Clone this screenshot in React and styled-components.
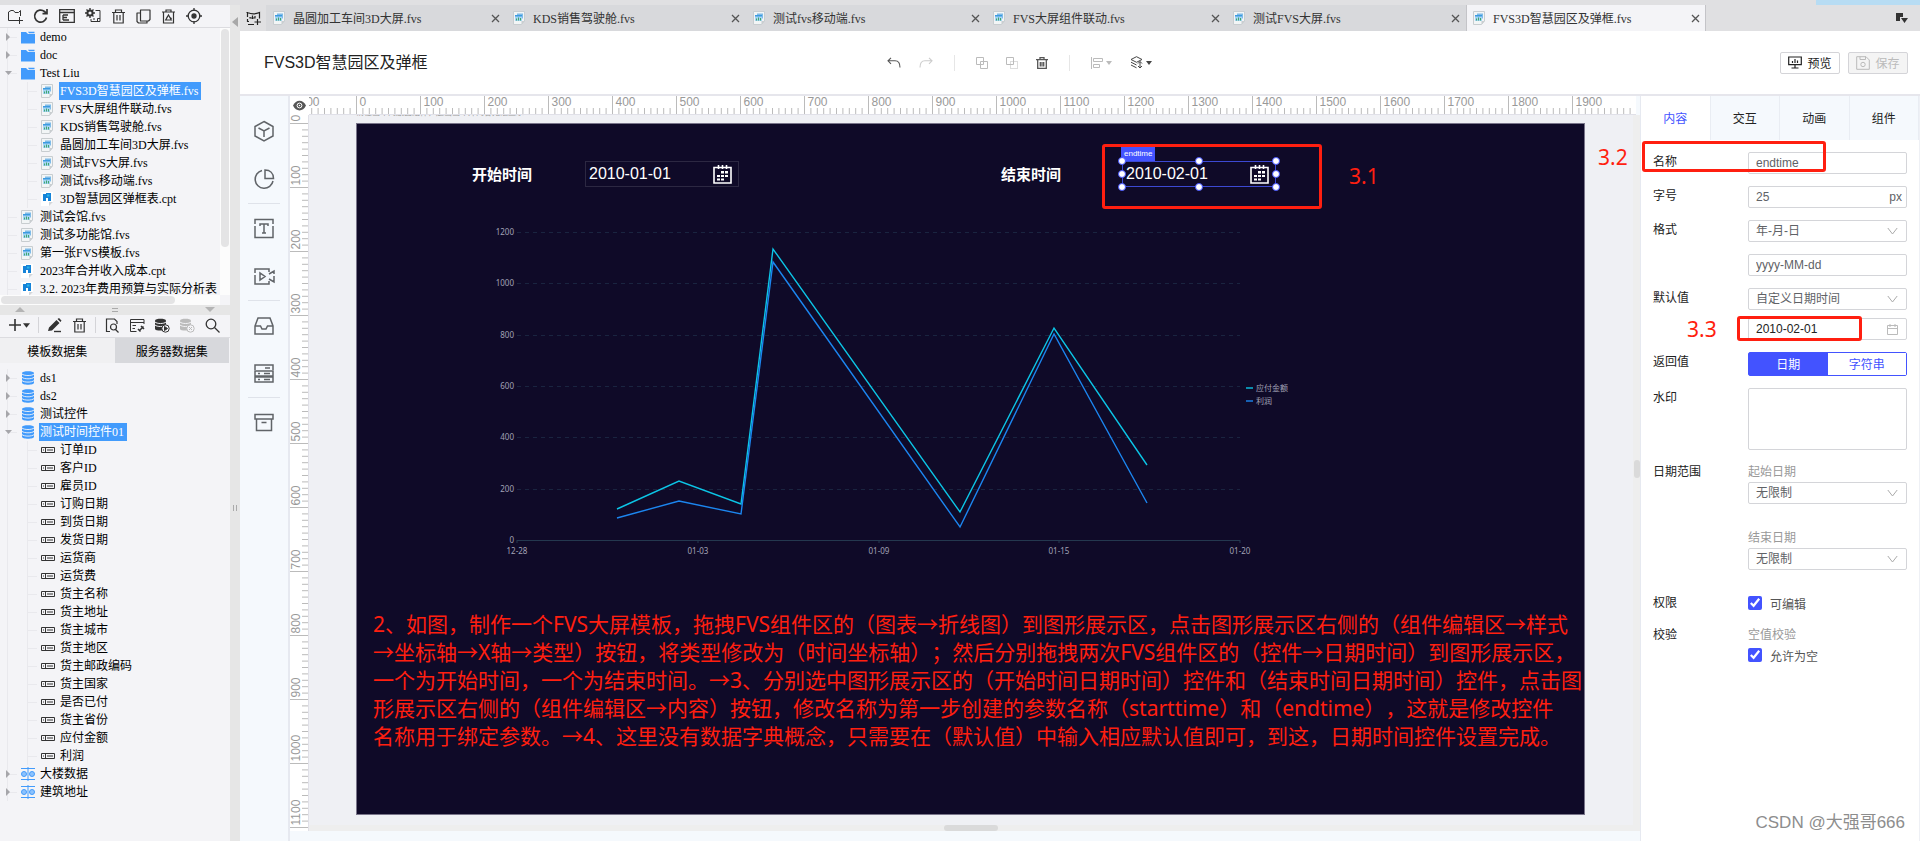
import React, { useState } from 'react';
import styled, { createGlobalStyle } from 'styled-components';

const UI_FONT = "'Liberation Sans', 'Noto Sans CJK SC', sans-serif";
const TREE_FONT = "'Liberation Serif', 'Noto Sans CJK SC', serif";
const NOTE_FONT = "'Noto Sans', 'Noto Sans CJK SC', sans-serif";

const GlobalStyle = createGlobalStyle`
  * {
    box-sizing: border-box;
  }

  body {
    margin: 0;
    overflow: hidden;
    font-family: ${UI_FONT};
    font-size: 12px;
    color: #222;
  }

  button, input, select, textarea {
    font-family: inherit;
    font-size: 12px;
    margin: 0;
  }

  ul {
    margin: 0;
    padding: 0;
    list-style: none;
  }
`;

/* ---------- shell ---------- */

const StyledApp = styled.div`
  display: flex;
  flex-direction: column;
  height: 100vh;
  background: #e0e0e2;
`;

const StyledTopStrip = styled.div`
  flex: none;
  display: flex;
  justify-content: flex-end;
  height: 5px;

  span {
    width: 104px;
    background: #b7dcf3;
  }
`;

const StyledBody = styled.div`
  flex: 1;
  display: flex;
  min-height: 0;
`;

const StyledSidebar = styled.aside`
  flex: none;
  display: flex;
  flex-direction: column;
  width: 230px;
  background: #f4f4f7;
  font-family: ${TREE_FONT};
  color: #000;
`;

const StyledSplitter = styled.div`
  flex: none;
  display: flex;
  flex-direction: column;
  align-items: center;
  justify-content: space-between;
  width: 10px;
  padding: 12px 0 330px;
  background: #e6e6e6;
`;

const StyledWorkspace = styled.main`
  flex: 1;
  display: flex;
  flex-direction: column;
  min-width: 0;
`;

/* ---------- sidebar ---------- */

const StyledIconBar = styled.div`
  flex: none;
  display: flex;
  align-items: center;
  justify-content: space-between;
  height: 23px;
  padding: ${({ $wide }) => ($wide ? '0 10px 2px 9px' : '0 28px 0 7px')};
  border-bottom: 1px solid #dcdce0;
`;

const StyledIconButton = styled.button`
  display: inline-flex;
  align-items: center;
  justify-content: center;
  gap: ${({ $gap }) => $gap || 0}px;
  padding: 0;
  border: 0;
  background: none;
  color: ${({ $color }) => $color || '#333'};
  cursor: pointer;
`;

const StyledBarSeparator = styled.span`
  width: 1px;
  height: 16px;
  margin: 0 -2px;
  background: #d4d4d8;
`;

const StyledFilePane = styled.div`
  flex: none;
  display: grid;
  grid-template-columns: 1fr 10px;
  grid-template-rows: 267px 10px;
`;

const StyledTreeScroll = styled.div`
  overflow: hidden;
`;

const StyledTrack = styled.div`
  padding: 1px;
  background: #fcfcfc;
`;

const StyledThumb = styled.div`
  width: ${({ $w }) => $w};
  height: ${({ $h }) => $h};
  border-radius: 4px;
  background: #e4e4e5;
`;

const StyledCollapser = styled.div`
  flex: none;
  display: flex;
  align-items: center;
  justify-content: space-between;
  height: 10px;
  padding: 0 15px;
  background: #e6e6e6;
`;

const StyledDataTabs = styled.div`
  flex: none;
  display: flex;
  height: 25px;
  margin-bottom: 6px;
  padding-right: 1px;
`;

const StyledDataTab = styled.button`
  flex: 1;
  padding: 0;
  border: 0;
  color: #000;
  background: ${({ $active }) => ($active ? '#f0f0f2' : '#d7d8dc')};
`;

const StyledTreeRow = styled.li`
  display: flex;
  align-items: center;
  height: 18px;
  line-height: 18px;
  white-space: nowrap;
`;

const StyledGuide = styled.span`
  flex: none;
  display: flex;
  align-items: center;
  width: 20px;
  height: 18px;
  padding-left: 5px;
  background:
    linear-gradient(#e9e9ed, #e9e9ed) 7px 0 / 1px 100% no-repeat,
    linear-gradient(#e9e9ed, #e9e9ed) 7px 9px /
      ${({ $stub }) => ($stub ? '10px' : '0')} 1px no-repeat;
`;

const StyledRowIcon = styled.span`
  flex: none;
  display: flex;
  align-items: center;
  width: 19px;
  padding-left: 1px;
`;

const StyledRowLabel = styled.span`
  padding: 0 3px 0 1px;
  color: ${({ $selected }) => ($selected ? '#fff' : '#000')};
  background: ${({ $selected }) => ($selected ? '#429bfc' : 'transparent')};
`;

/* ---------- file tabs and header ---------- */

const StyledTabBar = styled.nav`
  flex: none;
  display: flex;
  height: 26px;
  font-family: ${TREE_FONT};
`;

const StyledTabBarStart = styled.div`
  display: flex;
  align-items: center;
  justify-content: center;
  width: 26px;
`;

const StyledFileTab = styled.div`
  flex: 0 1 240px;
  display: flex;
  align-items: center;
  gap: 7px;
  min-width: 0;
  padding: 0 6px 0 7px;
  color: #333;
  background: ${({ $active }) => ($active ? '#f4f4f7' : '#d8d9dc')};
  box-shadow: ${({ $active }) => ($active ? 'inset 1px 0 #c4c4c8, inset -1px 0 #c4c4c8' : 'none')};
  white-space: nowrap;

  span {
    flex: 1;
    overflow: hidden;
  }
`;

const StyledTabBarEnd = styled.div`
  flex: 1;
  display: flex;
  align-items: center;
  justify-content: flex-end;
  padding-right: 12px;
`;

const StyledHeader = styled.header`
  flex: none;
  display: grid;
  grid-template-columns: 1fr auto 1fr;
  align-items: center;
  height: 65px;
  padding: 0 12px 0 24px;
  background: #fff;
  border-bottom: 2px solid #e6e6ec;
`;

const StyledTitle = styled.h1`
  margin: 0;
  padding-bottom: 4px;
  font-size: 16px;
  font-weight: 400;
  color: #222;
`;

const StyledTools = styled.div`
  display: flex;
  align-items: center;
  gap: 18px;
  margin-right: 133px;
`;

const StyledToolSeparator = styled.span`
  width: 1px;
  height: 16px;
  margin: 0 3px;
  background: #e6e6e6;
`;

const StyledHeaderActions = styled.div`
  display: flex;
  justify-content: flex-end;
  gap: 8px;
`;

const StyledActionButton = styled.button`
  display: flex;
  align-items: center;
  justify-content: center;
  gap: 5px;
  width: 60px;
  height: 22px;
  padding: 0;
  border: 1px solid #d4d4d8;
  border-radius: 2px;
  color: #222;
  background: #fff;

  &:disabled {
    color: #bbb;
    background: #f4f4f4;
  }
`;

/* ---------- editor ---------- */

const StyledEditor = styled.div`
  flex: 1;
  display: flex;
  min-height: 0;
`;

const StyledRail = styled.div`
  flex: none;
  display: flex;
  flex-direction: column;
  align-items: center;
  width: 50px;
  padding-top: 23px;
  background: #f5f9fd;
  border-right: 2px solid #e6e9f0;
`;

const StyledRailButton = styled(StyledIconButton)`
  width: 24px;
  height: 24px;
  margin: ${({ $last }) => ($last ? '0 0 12px' : '0 0 24px')};
`;

const StyledRailSeparator = styled.span`
  width: 32px;
  height: 1px;
  margin-bottom: 12px;
  background: #dfe3ea;
`;

const StyledStage = styled.section`
  flex: 1;
  display: grid;
  grid-template-columns: 19px minmax(0, 1fr) 7px;
  grid-template-rows: 19px minmax(0, 1fr) 6px 10px;
  min-width: 0;
  background: #f5f9fd;
`;

const StyledCorner = styled.div`
  display: flex;
  align-items: center;
  justify-content: center;
  background: #fff;
`;

const StyledTopRuler = styled.div`
  grid-column: 2 / 4;
  margin-right: 4px;
  background: #fff;
  border-bottom: 1px solid #e0e0e8;
  overflow: hidden;
`;

const StyledSideRuler = styled.div`
  grid-row: 2 / 4;
  grid-column: 1;
  background: #fff;
  border-right: 1px solid #e0e0e8;
  overflow: hidden;
`;

const StyledRulerSvg = styled.svg`
  display: block;
  width: 100%;
  height: 100%;
  fill: #999;
  stroke: none;
  font-size: 12px;

  line {
    stroke: #bbb;
  }
`;

const StyledViewport = styled.div`
  display: flex;
  flex-direction: column;
  padding: 0 48px 10px 47px;
  background: #eff0f4;
  overflow: hidden;
`;

const StyledHint = styled.p`
  flex: none;
  display: flex;
  align-items: flex-end;
  height: 3px;
  margin: 0 0 5px;
  overflow: hidden;
  font-size: 8px;
  line-height: 10px;
  color: #999;
  white-space: nowrap;
`;

const StyledCanvas = styled.div`
  flex: 1;
  position: relative;
  border: 1px solid #79758a;
  background: #0f0a28;
`;

const StyledScrollY = styled.div`
  grid-column: 3;
  display: flex;
  align-items: center;
  justify-content: center;
  padding-bottom: 2px;
  background: #eee;
`;

const StyledScrollX = styled.div`
  grid-column: 2 / 4;
  display: flex;
  justify-content: center;
  padding-right: 7px;
  background: #eee;
`;

const StyledScrollThumb = styled.span`
  width: ${({ $vertical }) => ($vertical ? '6px' : '54px')};
  height: ${({ $vertical }) => ($vertical ? '18px' : '6px')};
  border-radius: 3px;
  background: #dadada;
`;

/* widgets dropped on the canvas, x / y are canvas coordinates */

const StyledWidget = styled.div`
  position: absolute;
  left: ${({ $x }) => $x}px;
  top: ${({ $y }) => $y}px;
`;

const StyledCaption = styled.label`
  font-size: 15px;
  font-weight: 700;
  line-height: 24px;
  color: #fff;
  white-space: nowrap;
`;

const StyledDateBox = styled.div`
  display: flex;
  align-items: center;
  justify-content: space-between;
  width: 154px;
  height: 26px;
  padding: 0 6px 0 3px;
  border: 1px solid ${({ $selected }) => ($selected ? '#3c49d2' : '#2c2842')};

  input {
    width: 110px;
    padding: 0;
    border: 0;
    outline: 0;
    font-size: 16px;
    color: #fff;
    background: none;
  }
`;

const StyledSelectionTag = styled.span`
  position: absolute;
  left: -1px;
  bottom: 100%;
  padding: 0 3px;
  font-size: 8px;
  line-height: 15px;
  color: #fff;
  background: #4353ff;
`;

const StyledHandle = styled.i`
  position: absolute;
  left: ${({ $left }) => $left};
  top: ${({ $top }) => $top};
  width: 8px;
  height: 8px;
  margin: -4px 0 0 -4px;
  border: 1px solid #4353ff;
  border-radius: 50%;
  background: #fff;
`;

const StyledNote = styled.p`
  margin: 0;
  font-family: ${NOTE_FONT};
  font-size: 21px;
  line-height: 28px;
  color: #ff1f10;
  white-space: nowrap;
  text-spacing-trim: space-all;
`;

const StyledChart = styled.svg`
  display: block;
  font-family: ${NOTE_FONT};
  font-size: 8px;
  fill: #a2a2b6;
`;

const StyledMark = styled.div`
  position: absolute;
  z-index: 2;
  left: ${({ $x }) => $x}px;
  top: ${({ $y }) => $y}px;
  width: ${({ $w }) => $w}px;
  height: ${({ $h }) => $h}px;
  border: 3px solid #ff1f10;
  border-radius: 3px;
  pointer-events: none;
`;

const StyledMarkLabel = styled(StyledNote)`
  position: absolute;
  z-index: 2;
  left: ${({ $x }) => $x}px;
  top: ${({ $y }) => $y}px;
`;

/* ---------- property panel ---------- */

const StyledPanel = styled.aside`
  flex: none;
  position: relative;
  display: flex;
  flex-direction: column;
  width: 280px;
  background: #fff;
  border-left: 1px solid #e6e9f0;
  border-right: 1px solid #eef0f5;
`;

const StyledPanelTabs = styled.div`
  flex: none;
  display: flex;
  height: 44px;
`;

const StyledPanelTab = styled.button`
  flex: 1;
  padding: 0 0 2px;
  border: 0;
  border-right: 1px solid #e9edf3;
  color: ${({ $active }) => ($active ? '#4353ff' : '#222')};
  background: ${({ $active }) => ($active ? '#fff' : '#f5f9fd')};
`;

const StyledForm = styled.form`
  display: flex;
  flex-direction: column;
  gap: 12px;
  padding: 12px 12px 0;
`;

const StyledFormRow = styled.div`
  position: relative;
  display: grid;
  grid-template-columns: 95px minmax(0, 1fr);
  margin-top: ${({ $space }) => $space || 0}px;
`;

const StyledFormLabel = styled.label`
  line-height: 20px;
  color: #222;
`;

const StyledFieldStack = styled.div`
  display: flex;
  flex-direction: column;
  gap: ${({ $gap }) => $gap || 0}px;
`;

const StyledField = styled.div`
  display: flex;
  align-items: center;
  height: 22px;
  padding: 0 8px 0 7px;
  border: 1px solid #d4d5d9;
  border-radius: 2px;
  color: #606266;

  input, select {
    flex: 1;
    min-width: 0;
    height: 20px;
    padding: 0;
    border: 0;
    outline: 0;
    appearance: none;
    color: ${({ $dark }) => ($dark ? '#222' : '#606266')};
    background: none;
  }
`;

const StyledUnit = styled.span`
  margin-right: -4px;
`;

const StyledSegment = styled.div`
  display: flex;
  height: 24px;
  border: 1px solid #4353ff;
  border-radius: 2px;

  button {
    flex: 1;
    padding: 0 0 2px;
    border: 0;
    color: #4353ff;
    background: #fff;
  }

  button[aria-pressed='true'] {
    color: #fff;
    background: #4353ff;
  }
`;

const StyledTextarea = styled.textarea`
  display: block;
  width: 100%;
  height: 62px;
  border: 1px solid #d4d5d9;
  border-radius: 2px;
  outline: 0;
  resize: none;
`;

const StyledSubLabel = styled.label`
  line-height: 20px;
  color: #999;
`;

const StyledCheck = styled.label`
  display: flex;
  align-items: center;
  gap: 8px;
  height: 20px;
  color: #555;

  input {
    width: 14px;
    height: 14px;
    accent-color: #4353ff;
  }
`;

const StyledWatermark = styled.div`
  margin-top: auto;
  padding: 0 14px 4px 0;
  font-size: 17px;
  line-height: 28px;
  color: #8d8d8d;
  text-align: right;
`;

/* ---------- icons ---------- */

const Svg = ({ w = 16, h = w, box = `0 0 ${w} ${h}`, sw = 1, children }) => (
  <svg
    width={w}
    height={h}
    viewBox={box}
    fill="none"
    stroke="currentColor"
    strokeWidth={sw}
    aria-hidden="true"
  >
    {children}
  </svg>
);

const FolderAddIcon = () => (
  <Svg>
    <path d="M9.500 12.500H1.500V4L4 2.500H6.500L8 4.500H11.500L13.500 2.500V8M12.500 9V16M9 12.500H16" />
  </Svg>
);

const RefreshIcon = () => (
  <Svg sw={1.7}>
    <path d="M13.500 9.500A6 6 0 1 1 11.500 3.500L13.200 5.200M14 1V5.700H9.500" />
  </Svg>
);

const RenameIcon = () => (
  <Svg sw={1.3}>
    <path d="M.7 1.700H15.300V14.300H.7ZM.7 4.500H15.300M4 7H9M4 9.500H8M4 12H10M4 7V12" />
  </Svg>
);

const GearDocIcon = () => (
  <Svg>
    <circle cx="5" cy="5" r="2.600" strokeWidth="2" />
    <path d="M5 0V2M5 8V10M0 5H2M8 5H10M1.500 1.500L3 3M7 7L8.500 8.500M8.500 1.500L7 3M1.500 8.500L3 7" strokeWidth="1.400" />
    <path d="M10.500 2.500H15V13.500H6V11M8 11H10M12.500 13.500V10.500H15" />
  </Svg>
);

const BinIcon = ({ w = 15 }) => (
  <Svg w={w} box="0 0 15 15" sw={1.200}>
    <path d="M1 3.500H14M4.500 3V1H10.500V3M2.800 3.500V14H12.200V3.500M6 6V11.500M9 6V11.500" />
  </Svg>
);

const CopyIcon = () => (
  <Svg w={15} sw={1.200}>
    <path d="M4.500 1H14V10.500L12.500 12H4.500ZM4.500 4H1V12.500L2.500 14H11V12" strokeLinejoin="round" />
  </Svg>
);

const RecycleIcon = () => (
  <Svg w={15} sw={1.200}>
    <path d="M1 3H14M5 3V1H10V3M2.500 3V14H12.500V3" />
    <path d="M7.500 6L10.300 11H4.700ZM6.500 7.500L5.500 9M9.500 8.500L10.500 10" />
  </Svg>
);

const TargetIcon = () => (
  <Svg sw={1.300}>
    <circle cx="8" cy="8" r="5.800" />
    <circle cx="8" cy="8" r="2" fill="currentColor" />
    <path d="M8 0V3M8 13V16M0 8H3M13 8H16" />
  </Svg>
);

const CaretIcon = ({ size = 6 }) => (
  <svg width={size} height={size} viewBox="0 0 6 6" fill="currentColor" aria-hidden="true">
    <path d="M0 1H6L3 5Z" />
  </svg>
);

const ArrowIcon = ({ open }) => (
  <svg width="8" height="8" viewBox="0 0 8 8" fill="#a6a6aa" aria-hidden="true">
    <path d={open ? 'M0 2H7L3.500 6Z' : 'M1 0L5 4L1 8Z'} />
  </svg>
);

const FolderIcon = () => (
  <svg width="14" height="13" viewBox="0 0 14 13" aria-hidden="true">
    <path d="M0 1H5L7 3H14V12.500H0Z" fill="#429bfc" />
    <path d="M7 .8H13.500V2.200H8Z" fill="#429bfc" />
  </svg>
);

const FvsIcon = () => (
  <svg width="13" height="14" viewBox="0 0 13 14" aria-hidden="true">
    <path d="M.5 .5H11.500V10L8.500 13.500H.5Z" fill="#f2f5f6" stroke="#c8cdd0" />
    <path d="M8.500 13.500V10H11.500Z" fill="#c8cdd0" />
    <path d="M4 2.500H10V7.500H9V4H4Z" fill="#7fbbe8" />
    <path d="M2 4H9V10H2Z" fill="#a8d4f5" />
    <path d="M2 4H9V5.500H2Z" fill="#3d9be0" />
    <path d="M3.500 9.500V7.500M5.500 9.500V6.500M7.500 9.500V7" stroke="#3fa86d" />
  </svg>
);

const CptIcon = () => (
  <svg width="13" height="14" viewBox="0 0 13 14" aria-hidden="true">
    <path d="M0 0H12V10L8 14H0Z" fill="#fff" />
    <path d="M2 2H5V1H10V9H7V6H5V9H2Z" fill="#1683d8" />
    <path d="M6 2.500H8.500V4.500H6Z" fill="#28b5e8" />
    <path d="M8 14V10H12Z" fill="#d3d6da" />
  </svg>
);

const DbIcon = () => (
  <svg width="14" height="14" viewBox="0 0 14 14" aria-hidden="true">
    <path d="M1 2.200C1 -.3 13 -.3 13 2.200V11.800C13 14.400 1 14.400 1 11.800Z" fill="#429bfc" />
    <path d="M1 3C3 5 11 5 13 3M1 6.300C3 8.300 11 8.300 13 6.300M1 9.600C3 11.600 11 11.600 13 9.600" fill="none" stroke="#f4f4f7" strokeWidth=".9" />
  </svg>
);

const ColumnIcon = () => (
  <svg width="14" height="6" viewBox="0 0 14 6" fill="none" stroke="#333" aria-hidden="true">
    <path d="M.5 .5H13.500V5.500H.5ZM4.500 0V6M2 3H3M6 3H12" />
  </svg>
);

const TreeDbIcon = () => (
  <svg width="14" height="14" viewBox="0 0 14 14" fill="none" stroke="#429bfc" aria-hidden="true">
    <path d="M0 1.500H14M0 12.500H14M7 0V14" />
    <circle cx="3" cy="7" r="2.500" fill="#8dc2fc" />
    <circle cx="11" cy="7" r="2.500" fill="#8dc2fc" />
  </svg>
);

const PencilIcon = () => (
  <Svg w={15}>
    <path d="M1 13L2 9.500L9.500 2L12.500 5L5 12.500ZM10.500 1L12 0L14.500 2.500L13.500 4Z" fill="currentColor" stroke="none" />
    <path d="M7 13.500H14" strokeWidth="1.400" />
  </Svg>
);

const DocSearchIcon = () => (
  <Svg w={15} sw={1.200}>
    <path d="M5 13.500H1.500V1H9.500L12 3.500V6" />
    <circle cx="8.500" cy="9" r="3" />
    <path d="M10.500 11.500L13.500 14.500" />
  </Svg>
);

const WindowLinkIcon = () => (
  <Svg w={15}>
    <path d="M6.500 13.500H.5V1.500H14V6M.5 4.500H14M2.500 7.500H6M2.500 10.500H5" />
    <path d="M9 13L13.500 8.500M8 11L10.500 13.500M11 8L14 11" strokeWidth="1.500" />
  </Svg>
);

const DbActionIcon = ({ kind }) => (
  <Svg w={15}>
    <path d="M0 2.500C0 .3 11 .3 11 2.500V11C11 13 0 13 0 11Z" fill="currentColor" stroke="none" />
    <path d="M0 4C2 6 9 6 11 4M0 7C2 9 9 9 11 7" stroke="#f4f4f7" />
    <circle cx="10.500" cy="10.500" r="3.700" fill="#f4f4f7" />
    <path d={kind === 'run' ? 'M9.500 8.500L12.500 10.500L9.500 12.500Z' : 'M9 9L12 12M12 9L9 12'} fill="currentColor" />
  </Svg>
);

const SearchIcon = () => (
  <Svg w={15} sw={1.300}>
    <circle cx="6" cy="6" r="4.800" />
    <path d="M9.500 9.500L14.500 14.500" />
  </Svg>
);

const NewBoardIcon = () => (
  <Svg w={15} h={14} sw={1.200}>
    <path d="M3 10.500H1.500V8M1.500 6V1.500H.5M1.500 1.500C5 3 10 3 13.500 1.500V7.500M2 13.500H8M4 7.500V6M6.500 8V4.500M9 7.500V5M4 7H9M11.500 8V14M8.500 11H15" stroke="#222" />
  </Svg>
);

const CloseIcon = () => (
  <Svg w={9} sw={1.300}>
    <path d="M1 1L8 8M8 1L1 8" />
  </Svg>
);

const TabMenuIcon = () => (
  <svg width="12" height="11" viewBox="0 0 12 11" fill="#333" aria-hidden="true">
    <path d="M0 0H7V4H4V8H0ZM5 5H12L8.500 10Z" />
  </svg>
);

const UndoIcon = ({ flip }) => (
  <Svg w={14} h={12} sw={1.100}>
    <path d={flip ? 'M10 .8L13 3.800L10 6.800M13 3.800H6C2.500 3.800 1 6 1 10.500' : 'M4 .8L1 3.800L4 6.800M1 3.800H8C11.500 3.800 13 6 13 10.500'} />
  </Svg>
);

const GroupIcon = ({ dashed }) => (
  <Svg w={12}>
    <path d="M.5 .5H7.500V7.500H.5Z" />
    <path d="M4.500 4.500H11.500V11.500H4.500Z" strokeDasharray={dashed ? '1 1' : undefined} />
  </Svg>
);

const DeleteIcon = () => (
  <Svg w={12} sw={1.300}>
    <path d="M0 2.700H12M4 2.500V.7H8V2.500M1.700 3V11.300H10.300V3M4.300 5V9.500M6 5V9.500M7.700 5V9.500" />
  </Svg>
);

const AlignIcon = () => (
  <Svg w={12}>
    <path d="M.5 0V12M2.500 1.500H11.500V4.500H2.500ZM2.500 7.500H8.500V10.500H2.500Z" />
  </Svg>
);

const LayersIcon = () => (
  <Svg w={13}>
    <path d="M6.500 .7L12 3.500L6.500 6.300L1 3.500ZM1 6.200L6.500 9M1 9L6.500 11.800M10 5.500V12M8 7.500L10 5.500L12 7.500M8 10L10 12L12 10" />
  </Svg>
);

const PreviewIcon = () => (
  <Svg w={14} h={13} sw={1.200}>
    <path d="M.7 1H13.300V8.700H.7ZM7 9V12M3.500 12H10.500M4.500 7V5M7 7V3M9.500 7V4.500" />
  </Svg>
);

const SaveIcon = () => (
  <Svg w={14}>
    <path d="M.7 .7H10L13.300 4V13.300H.7ZM4 .7V3.500H9.500V.7" />
    <circle cx="7" cy="8.500" r="2.200" />
  </Svg>
);

const EyeIcon = () => (
  <svg width="13" height="11" viewBox="0 0 13 11" aria-hidden="true">
    <path d="M0 5.500C3 -1 10 -1 13 5.500C10 12 3 12 0 5.500Z" fill="#555" />
    <circle cx="6.500" cy="5.500" r="2.400" fill="none" stroke="#fff" />
    <circle cx="6.500" cy="5.500" r=".8" fill="#fff" />
  </svg>
);

const ChevronIcon = () => (
  <Svg w={11} h={8}>
    <path d="M.8 1L5.500 7L10.200 1" stroke="#aaa" />
  </Svg>
);

const SmallCalendarIcon = () => (
  <Svg w={11}>
    <path d="M.5 1.500H10.500V10.500H.5ZM.5 4.500H10.500M3 0V3M8 0V3" stroke="#bbb" />
  </Svg>
);

const CalendarIcon = () => (
  <Svg w={19} sw={1.600}>
    <path d="M1 2.500H18V18H1ZM1 2.500H3M5.500 0V4M9.500 0V4M13.500 0V4" />
    <path d="M12 6H15V8.500H12ZM8 6H11V8.500H8ZM4 10H7V12H4ZM8 10H11V12H8ZM12 10H15V12H12ZM4 13.500H7V15.500H4ZM8 13.500H11V15.500H8Z" fill="currentColor" stroke="none" />
  </Svg>
);

const RAIL_PATHS = {
  cube: 'M11 1.500L20 6.500V16L11 21L2 16V6.500ZM5.500 8L11 11L16.500 8M11 11V17',
  pie: 'M9 2.500A9 9 0 1 0 20 13M12 2V10.500H20.500C20.500 5 17 2 12 2Z',
  text: 'M2 7V2.500H20V7M2 9V20.500H20V9M7 9V7H15V9M11 7V16M9 16H13',
  video: 'M16 7V4H2V8M2 10V19H16V16M16 9L21 6V9M16 14L21 17V11M7 8V15L12 11.500Z',
  inbox: 'M2 12L5 4H17L20 12V20H2ZM2 12H7.500L9 15H13L14.500 12H20',
  server: 'M2 8V3H20V8M2 9H20V14H2ZM2 15H20V20H2ZM12 6H17M5 11.500H7M11 11.500H17M5 17.500H7M11 17.500H17',
  archive: 'M2 3.500H20V8H2ZM3.500 8V19.500H18.500V8M8.500 11.500H13.500',
};

const RailIcon = ({ name }) => (
  <Svg w={22} sw={1.500}>
    <path d={RAIL_PATHS[name]} stroke="#606468" />
  </Svg>
);

/* ---------- data ---------- */

const files = [
  { icon: 'folder', name: 'demo', arrow: true },
  { icon: 'folder', name: 'doc', arrow: true },
  { icon: 'folder', name: 'Test Liu', arrow: true, open: true },
  { icon: 'fvs', name: 'FVS3D智慧园区及弹框.fvs', nested: true, selected: true },
  { icon: 'fvs', name: 'FVS大屏组件联动.fvs', nested: true },
  { icon: 'fvs', name: 'KDS销售驾驶舱.fvs', nested: true },
  { icon: 'fvs', name: '晶圆加工车间3D大屏.fvs', nested: true },
  { icon: 'fvs', name: '测试FVS大屏.fvs', nested: true },
  { icon: 'fvs', name: '测试fvs移动端.fvs', nested: true },
  { icon: 'cpt', name: '3D智慧园区弹框表.cpt', nested: true },
  { icon: 'fvs', name: '测试会馆.fvs' },
  { icon: 'fvs', name: '测试多功能馆.fvs' },
  { icon: 'fvs', name: '第一张FVS模板.fvs' },
  { icon: 'cpt', name: '2023年合并收入成本.cpt' },
  { icon: 'cpt', name: '3.2. 2023年费用预算与实际分析表' },
];

const columns = [
  '订单ID', '客户ID', '雇员ID', '订购日期', '到货日期', '发货日期',
  '运货商', '运货费', '货主名称', '货主地址', '货主城市', '货主地区',
  '货主邮政编码', '货主国家', '是否已付', '货主省份', '应付金额', '利润',
];

const datasets = [
  { icon: 'db', name: 'ds1', arrow: true },
  { icon: 'db', name: 'ds2', arrow: true },
  { icon: 'db', name: '测试控件', arrow: true },
  { icon: 'db', name: '测试时间控件01', arrow: true, open: true, selected: true },
  ...columns.map((name) => ({ icon: 'column', name, nested: true })),
  { icon: 'treeDb', name: '大楼数据', arrow: true },
  { icon: 'treeDb', name: '建筑地址', arrow: true },
];

const openFiles = [
  '晶圆加工车间3D大屏.fvs',
  'KDS销售驾驶舱.fvs',
  '测试fvs移动端.fvs',
  'FVS大屏组件联动.fvs',
  '测试FVS大屏.fvs',
  'FVS3D智慧园区及弹框.fvs',
];

const treeIcons = {
  folder: FolderIcon,
  fvs: FvsIcon,
  cpt: CptIcon,
  db: DbIcon,
  column: ColumnIcon,
  treeDb: TreeDbIcon,
};

const noteLines = [
  '2、如图，制作一个FVS大屏模板，拖拽FVS组件区的（图表→折线图）到图形展示区，点击图形展示区右侧的（组件编辑区→样式',
  '→坐标轴→X轴→类型）按钮，将类型修改为（时间坐标轴）；然后分别拖拽两次FVS组件区的（控件→日期时间）到图形展示区，',
  '一个为开始时间，一个为结束时间。→3、分别选中图形展示区的（开始时间日期时间）控件和（结束时间日期时间）控件，点击图',
  '形展示区右侧的（组件编辑区→内容）按钮，修改名称为第一步创建的参数名称（starttime）和（endtime），这就是修改控件',
  '名称用于绑定参数。→4、这里没有数据字典概念，只需要在（默认值）中输入相应默认值即可，到这，日期时间控件设置完成。',
];

const chartX = [100, 162, 224, 256, 443, 537, 630];
const series = [
  { name: '应付金额', color: '#0cc5e6', values: [119, 230, 142, 1134, 110, 827, 292] },
  { name: '利润', color: '#1c86f0', values: [86, 152, 101, 1082, 52, 805, 143] },
];

/* ---------- components ---------- */

const Tree = ({ rows }) => (
  <ul>
    {rows.map(({ icon, name, arrow, open, nested, selected }) => {
      const Icon = treeIcons[icon];
      return (
        <StyledTreeRow key={name}>
          <StyledGuide $stub={!nested}>{arrow && <ArrowIcon open={open} />}</StyledGuide>
          {nested && <StyledGuide $stub />}
          <StyledRowIcon>
            <Icon />
          </StyledRowIcon>
          <StyledRowLabel $selected={selected}>{name}</StyledRowLabel>
        </StyledTreeRow>
      );
    })}
  </ul>
);

const Sidebar = () => (
  <StyledSidebar>
    <StyledIconBar>
      <StyledIconButton aria-label="新建目录"><FolderAddIcon /></StyledIconButton>
      <StyledIconButton aria-label="刷新"><RefreshIcon /></StyledIconButton>
      <StyledIconButton aria-label="重命名"><RenameIcon /></StyledIconButton>
      <StyledIconButton aria-label="配置"><GearDocIcon /></StyledIconButton>
      <StyledIconButton aria-label="删除"><BinIcon /></StyledIconButton>
      <StyledIconButton aria-label="复制"><CopyIcon /></StyledIconButton>
      <StyledIconButton aria-label="回收站"><RecycleIcon /></StyledIconButton>
      <StyledIconButton aria-label="定位"><TargetIcon /></StyledIconButton>
    </StyledIconBar>
    <StyledFilePane>
      <StyledTreeScroll>
        <Tree rows={files} />
      </StyledTreeScroll>
      <StyledTrack>
        <StyledThumb $w="8px" $h="218px" />
      </StyledTrack>
      <StyledTrack>
        <StyledThumb $w="174px" $h="8px" />
      </StyledTrack>
    </StyledFilePane>
    <StyledCollapser>
      <svg width="10" height="6" viewBox="0 0 10 6" fill="#b4b4b4"><path d="M0 5L5 0L10 5Z" /></svg>
      <svg width="6" height="4" viewBox="0 0 6 4" stroke="#aaa"><path d="M0 .5H6M0 3.500H6" /></svg>
      <svg width="10" height="6" viewBox="0 0 10 6" fill="#b4b4b4"><path d="M0 0L5 5L10 0Z" /></svg>
    </StyledCollapser>
    <StyledIconBar $wide>
      <StyledIconButton aria-label="添加数据集" $gap={2}>
        <Svg w={12} sw={1.600}><path d="M6 0V12M0 6H12" /></Svg>
        <CaretIcon size={7} />
      </StyledIconButton>
      <StyledBarSeparator />
      <StyledIconButton aria-label="编辑"><PencilIcon /></StyledIconButton>
      <StyledIconButton aria-label="删除数据集"><BinIcon /></StyledIconButton>
      <StyledBarSeparator />
      <StyledIconButton aria-label="预览数据集"><DocSearchIcon /></StyledIconButton>
      <StyledIconButton aria-label="关联"><WindowLinkIcon /></StyledIconButton>
      <StyledIconButton aria-label="执行"><DbActionIcon kind="run" /></StyledIconButton>
      <StyledIconButton aria-label="停止" $color="#bbb"><DbActionIcon kind="stop" /></StyledIconButton>
      <StyledIconButton aria-label="搜索"><SearchIcon /></StyledIconButton>
    </StyledIconBar>
    <StyledDataTabs>
      <StyledDataTab $active>模板数据集</StyledDataTab>
      <StyledDataTab>服务器数据集</StyledDataTab>
    </StyledDataTabs>
    <Tree rows={datasets} />
  </StyledSidebar>
);

const FileTabs = () => (
  <StyledTabBar>
    <StyledTabBarStart>
      <StyledIconButton aria-label="新建"><NewBoardIcon /></StyledIconButton>
    </StyledTabBarStart>
    {openFiles.map((name, i) => (
      <StyledFileTab key={name} $active={i === openFiles.length - 1}>
        <FvsIcon />
        <span>{name}</span>
        <StyledIconButton aria-label="关闭" $color="#555"><CloseIcon /></StyledIconButton>
      </StyledFileTab>
    ))}
    <StyledTabBarEnd>
      <StyledIconButton aria-label="更多"><TabMenuIcon /></StyledIconButton>
    </StyledTabBarEnd>
  </StyledTabBar>
);

const Header = () => (
  <StyledHeader>
    <StyledTitle>FVS3D智慧园区及弹框</StyledTitle>
    <StyledTools>
      <StyledIconButton aria-label="撤销" $color="#555"><UndoIcon /></StyledIconButton>
      <StyledIconButton aria-label="重做" $color="#ccc"><UndoIcon flip /></StyledIconButton>
      <StyledToolSeparator />
      <StyledIconButton aria-label="组合" $color="#bbb"><GroupIcon /></StyledIconButton>
      <StyledIconButton aria-label="取消组合" $color="#bbb"><GroupIcon dashed /></StyledIconButton>
      <StyledIconButton aria-label="删除组件" $color="#555"><DeleteIcon /></StyledIconButton>
      <StyledToolSeparator />
      <StyledIconButton aria-label="对齐" $color="#bbb" $gap={3}><AlignIcon /><CaretIcon /></StyledIconButton>
      <StyledIconButton aria-label="层级" $color="#444" $gap={3}><LayersIcon /><CaretIcon /></StyledIconButton>
    </StyledTools>
    <StyledHeaderActions>
      <StyledActionButton><PreviewIcon />预览</StyledActionButton>
      <StyledActionButton disabled><SaveIcon />保存</StyledActionButton>
    </StyledHeaderActions>
  </StyledHeader>
);

const Rail = () => (
  <StyledRail>
    <StyledRailButton aria-label="组件"><RailIcon name="cube" /></StyledRailButton>
    <StyledRailButton aria-label="图表" $last><RailIcon name="pie" /></StyledRailButton>
    <StyledRailSeparator />
    <StyledRailButton aria-label="文本"><RailIcon name="text" /></StyledRailButton>
    <StyledRailButton aria-label="媒体" $last><RailIcon name="video" /></StyledRailButton>
    <StyledRailSeparator />
    <StyledRailButton aria-label="素材"><RailIcon name="inbox" /></StyledRailButton>
    <StyledRailButton aria-label="控件" $last><RailIcon name="server" /></StyledRailButton>
    <StyledRailSeparator />
    <StyledRailButton aria-label="收纳"><RailIcon name="archive" /></StyledRailButton>
  </StyledRail>
);

// one step is ten canvas pixels at 64% zoom
const STEP = 6.4;

const Ruler = ({ vertical, origin, from, to, lastLabel = to }) => {
  const steps = Array.from({ length: (to - from) * 10 + 1 }, (_, i) => from * 10 + i);
  return (
    <StyledRulerSvg>
      {steps.map((step) => {
        const at = origin + step * STEP;
        const major = step % 10 === 0;
        const start = major ? 0 : 12;
        return (
          <g key={step}>
            {vertical ? (
              <line x1={start} x2="18" y1={at} y2={at} />
            ) : (
              <line x1={at} x2={at} y1={start} y2="18" />
            )}
            {major && step <= lastLabel * 10 &&
              (vertical ? (
                <text transform={`translate(10 ${at - 2}) rotate(-90)`}>{step * 10}</text>
              ) : (
                <text x={at + 3} y="10">{step * 10}</text>
              ))}
          </g>
        );
      })}
    </StyledRulerSvg>
  );
};

const LineChart = () => {
  const left = 24;
  const bottom = 320;
  const y = (value) => bottom - Math.round(value * 0.2565);
  return (
    <StyledChart width="820" height="345">
      {[0, 200, 400, 600, 800, 1000, 1200].map((value) => (
        <g key={value}>
          <line
            x1={left}
            x2={left + 723}
            y1={y(value) + 0.5}
            y2={y(value) + 0.5}
            stroke={value ? '#1a2440' : '#24384f'}
            strokeDasharray={value ? '4 4' : undefined}
          />
          <text x={left - 3} y={y(value) + 3} textAnchor="end">{value}</text>
        </g>
      ))}
      {['12-28', '01-03', '01-09', '01-15', '01-20'].map((day, i) => (
        <g key={day}>
          <path d={`M${left + Math.round(i * 180.75)} ${bottom}v3`} stroke="#24384f" />
          <text x={left + Math.round(i * 180.75)} y={bottom + 14} textAnchor="middle">
            {day}
          </text>
        </g>
      ))}
      {series.map(({ name, color, values }, i) => (
        <g key={name}>
          <polyline
            points={values.map((value, n) => `${left + chartX[n]},${y(value)}`).join(' ')}
            fill="none"
            stroke={color}
            strokeWidth="1.4"
          />
          <line
            x1={left + 729}
            x2={left + 736}
            y1={168 + i * 13}
            y2={168 + i * 13}
            stroke={color}
            strokeWidth="1.4"
          />
          <text x={left + 739} y={171 + i * 13}>{name}</text>
        </g>
      ))}
    </StyledChart>
  );
};

const handles = [
  ['0', '0'], ['50%', '0'], ['100%', '0'],
  ['0', '50%'], ['100%', '50%'],
  ['0', '100%'], ['50%', '100%'], ['100%', '100%'],
];

const DateWidget = ({ id, value, selected }) => (
  <StyledDateBox $selected={selected}>
    {selected && <StyledSelectionTag>{id}</StyledSelectionTag>}
    <input id={id} defaultValue={value} />
    <StyledIconButton aria-label="选择日期" $color="#fff"><CalendarIcon /></StyledIconButton>
    {selected && handles.map(([left, top]) => (
      <StyledHandle key={left + top} $left={left} $top={top} />
    ))}
  </StyledDateBox>
);

const Stage = () => (
  <StyledStage>
    <StyledCorner><EyeIcon /></StyledCorner>
    <StyledTopRuler>
      <Ruler origin={47.5} from={-1} to={20} lastLabel={19} />
    </StyledTopRuler>
    <StyledSideRuler>
      <Ruler vertical origin={8.5} from={0} to={11} />
    </StyledSideRuler>
    <StyledViewport>
      <StyledHint>请在画布内放置组件，超出画布外内容无法显示</StyledHint>
      <StyledCanvas>
        <StyledWidget $x={115} $y={39}>
          <StyledCaption htmlFor="starttime">开始时间</StyledCaption>
        </StyledWidget>
        <StyledWidget $x={228} $y={37}>
          <DateWidget id="starttime" value="2010-01-01" />
        </StyledWidget>
        <StyledWidget $x={644} $y={39}>
          <StyledCaption htmlFor="endtime">结束时间</StyledCaption>
        </StyledWidget>
        <StyledWidget $x={765} $y={37}>
          <DateWidget id="endtime" value="2010-02-01" selected />
        </StyledWidget>
        <StyledWidget $x={136} $y={96}>
          <LineChart />
        </StyledWidget>
        <StyledMark $x={745} $y={20} $w={220} $h={65} />
        <StyledMarkLabel $x={992} $y={38}>3.1</StyledMarkLabel>
        <StyledWidget $x={16} $y={486}>
          {noteLines.map((line) => (
            <StyledNote key={line}>{line}</StyledNote>
          ))}
        </StyledWidget>
      </StyledCanvas>
    </StyledViewport>
    <StyledScrollY><StyledScrollThumb $vertical /></StyledScrollY>
    <StyledScrollX><StyledScrollThumb /></StyledScrollX>
  </StyledStage>
);

const SelectField = ({ id, value }) => (
  <StyledField>
    <select id={id} defaultValue={value}>
      <option>{value}</option>
    </select>
    <ChevronIcon />
  </StyledField>
);

const Panel = () => {
  const [returnType, setReturnType] = useState('日期');

  return (
    <StyledPanel>
      <StyledPanelTabs>
        {['内容', '交互', '动画', '组件'].map((tab, i) => (
          <StyledPanelTab key={tab} $active={i === 0}>{tab}</StyledPanelTab>
        ))}
      </StyledPanelTabs>
      <StyledForm>
        <StyledFormRow>
          <StyledFormLabel htmlFor="name">名称</StyledFormLabel>
          <StyledField><input id="name" defaultValue="endtime" /></StyledField>
          <StyledMark $x={-11} $y={-11} $w={184} $h={31} />
          <StyledMarkLabel $x={-55} $y={-9}>3.2</StyledMarkLabel>
        </StyledFormRow>
        <StyledFormRow>
          <StyledFormLabel htmlFor="size">字号</StyledFormLabel>
          <StyledField>
            <input id="size" defaultValue="25" />
            <StyledUnit>px</StyledUnit>
          </StyledField>
        </StyledFormRow>
        <StyledFormRow>
          <StyledFormLabel htmlFor="format">格式</StyledFormLabel>
          <StyledFieldStack $gap={12}>
            <SelectField id="format" value="年-月-日" />
            <StyledField><input aria-label="格式文本" defaultValue="yyyy-MM-dd" /></StyledField>
          </StyledFieldStack>
        </StyledFormRow>
        <StyledFormRow>
          <StyledFormLabel htmlFor="default">默认值</StyledFormLabel>
          <StyledFieldStack $gap={8}>
            <SelectField id="default" value="自定义日期时间" />
            <StyledField $dark>
              <input aria-label="默认日期" defaultValue="2010-02-01" />
              <SmallCalendarIcon />
            </StyledField>
          </StyledFieldStack>
          <StyledMark $x={84} $y={28} $w={125} $h={25} />
          <StyledMarkLabel $x={34} $y={27}>3.3</StyledMarkLabel>
        </StyledFormRow>
        <StyledFormRow>
          <StyledFormLabel as="span">返回值</StyledFormLabel>
          <StyledSegment>
            {['日期', '字符串'].map((type) => (
              <button
                key={type}
                type="button"
                aria-pressed={returnType === type}
                onClick={() => setReturnType(type)}
              >
                {type}
              </button>
            ))}
          </StyledSegment>
        </StyledFormRow>
        <StyledFormRow>
          <StyledFormLabel htmlFor="placeholder">水印</StyledFormLabel>
          <StyledTextarea id="placeholder" />
        </StyledFormRow>
        <StyledFormRow>
          <StyledFormLabel as="span">日期范围</StyledFormLabel>
          <StyledFieldStack $gap={24}>
            <StyledFieldStack>
              <StyledSubLabel htmlFor="from">起始日期</StyledSubLabel>
              <SelectField id="from" value="无限制" />
            </StyledFieldStack>
            <StyledFieldStack>
              <StyledSubLabel htmlFor="to">结束日期</StyledSubLabel>
              <SelectField id="to" value="无限制" />
            </StyledFieldStack>
          </StyledFieldStack>
        </StyledFormRow>
        <StyledFormRow $space={11}>
          <StyledFormLabel as="span">权限</StyledFormLabel>
          <StyledCheck><input type="checkbox" defaultChecked />可编辑</StyledCheck>
        </StyledFormRow>
        <StyledFormRow>
          <StyledFormLabel as="span">校验</StyledFormLabel>
          <StyledFieldStack>
            <StyledSubLabel as="span">空值校验</StyledSubLabel>
            <StyledCheck><input type="checkbox" defaultChecked />允许为空</StyledCheck>
          </StyledFieldStack>
        </StyledFormRow>
      </StyledForm>
      <StyledWatermark>CSDN @大强哥666</StyledWatermark>
    </StyledPanel>
  );
};

const App = () => (
  <>
    <GlobalStyle />
    <StyledApp>
      <StyledTopStrip><span /></StyledTopStrip>
      <StyledBody>
        <Sidebar />
        <StyledSplitter>
          <svg width="6" height="10" viewBox="0 0 6 10" fill="#a8a8a8"><path d="M6 0L0 5L6 10Z" /></svg>
          <svg width="4" height="6" viewBox="0 0 4 6" stroke="#aaa"><path d="M.5 0V6M3.500 0V6" /></svg>
        </StyledSplitter>
        <StyledWorkspace>
          <FileTabs />
          <Header />
          <StyledEditor>
            <Rail />
            <Stage />
            <Panel />
          </StyledEditor>
        </StyledWorkspace>
      </StyledBody>
    </StyledApp>
  </>
);

export default App;
